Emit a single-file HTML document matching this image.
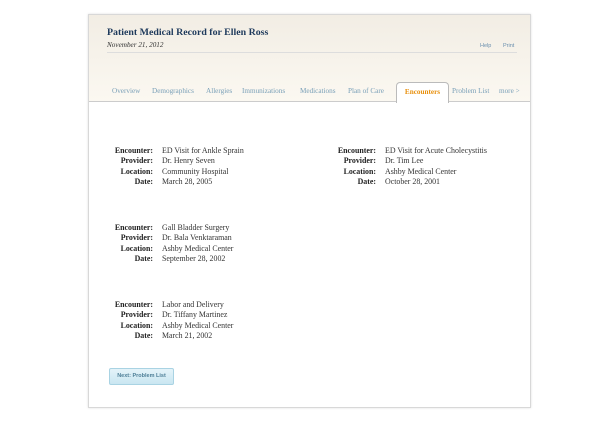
<!DOCTYPE html>
<html><head><style>
body{margin:0;width:615px;height:424px;background:#fff;font-family:"Liberation Serif",serif;position:relative;overflow:hidden}
.box{position:absolute;left:88px;top:14px;width:441px;height:392px;border:1px solid #d8d8d8;box-shadow:0 0 2px #ddd;background:#fff}
.hdr{position:absolute;left:0;top:0;width:441px;height:86px;background:linear-gradient(#f2ede4,#fbf8f1);border-bottom:1px solid #ccc}
.t{position:absolute;left:18px;top:12px;font-size:9.9px;font-weight:bold;color:#1e3a5c}
.d{position:absolute;left:18px;top:26px;font-size:7.2px;font-style:italic;color:#333}
.hl{position:absolute;left:18px;top:37px;width:410px;border-top:1px solid #ddd}
.lk{position:absolute;top:28px;font-family:"Liberation Sans",sans-serif;font-size:5.5px;color:#6a8fae}
.tab{position:absolute;top:72px;font-size:7.2px;color:#7aa0b8}
.act{position:absolute;left:307px;top:67px;width:51px;height:20px;background:#fff;border:1px solid #bbb;border-bottom:none;border-radius:4px 4px 0 0;color:#e8900e;font-weight:bold;font-size:7.2px;text-align:center;line-height:18px}
.r{position:absolute;font-size:7.9px;color:#333;white-space:nowrap}
.l{position:absolute;font-size:7.9px;font-weight:bold;color:#222;text-align:right;width:70px}
.btn{position:absolute;left:20px;top:353px;width:63px;height:15px;border:1px solid #a9d3e3;border-radius:2px;background:linear-gradient(#e4f3f9,#c9e6f1);font-family:"Liberation Sans",sans-serif;font-size:5.5px;font-weight:bold;color:#4e7f97;text-align:center;line-height:15px}
</style></head><body>
<div class="box">
<div class="hdr">
<div class="t">Patient Medical Record for Ellen Ross</div>
<div class="d">November 21, 2012</div>
<div class="hl"></div>
<div class="lk" style="left:391px">Help</div>
<div class="lk" style="left:414px">Print</div>
<div class="tab" style="left:23px">Overview</div>
<div class="tab" style="left:63px">Demographics</div>
<div class="tab" style="left:117px">Allergies</div>
<div class="tab" style="left:153px">Immunizations</div>
<div class="tab" style="left:211px">Medications</div>
<div class="tab" style="left:259px">Plan of Care</div>
<div class="act">Encounters</div>
<div class="tab" style="left:363px">Problem List</div>
<div class="tab" style="left:410px">more &gt;</div>
</div>
<div id="c"></div>
<div class="btn">Next: Problem List</div>
</div>
<script>
var d=[[0,131,["ED Visit for Ankle Sprain","Dr. Henry Seven","Community Hospital","March 28, 2005"]],
[223,131,["ED Visit for Acute Cholecystitis","Dr. Tim Lee","Ashby Medical Center","October 28, 2001"]],
[0,208,["Gall Bladder Surgery","Dr. Bala Venktaraman","Ashby Medical Center","September 28, 2002"]],
[0,285,["Labor and Delivery","Dr. Tiffany Martinez","Ashby Medical Center","March 21, 2002"]]];
var L=["Encounter:","Provider:","Location:","Date:"],h="";
d.forEach(function(b){for(var i=0;i<4;i++){var y=b[1]+i*10.4;h+='<div class="l" style="left:'+(-6+b[0])+'px;top:'+y+'px">'+L[i]+'</div><div class="r" style="left:'+(73+b[0])+'px;top:'+y+'px">'+b[2][i]+'</div>';}});
document.getElementById('c').innerHTML=h;
</script>
</body></html>
